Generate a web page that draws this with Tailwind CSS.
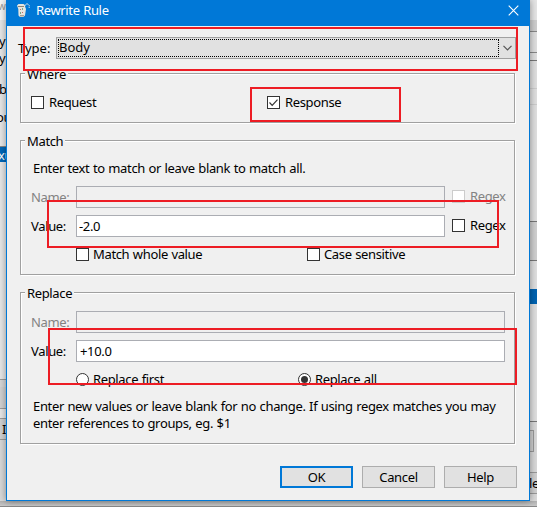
<!DOCTYPE html>
<html lang="en">
<head>
<meta charset="utf-8">
<title>Rewrite Rule</title>
<script src="https://cdn.jsdelivr.net/npm/@tailwindcss/browser@4"></script>
</head>
<body class="relative h-[507px] w-[537px] overflow-hidden bg-[#e2e2e2] font-['Noto_Sans',sans-serif] text-[13px] leading-[17px] tracking-[-0.35px] text-black [word-spacing:0.5px]">
<!-- Parent window showing around the dialog -->
<div class="flex h-[507px] justify-between">
  <div class="flex w-[6px] flex-col overflow-hidden bg-[#e6e6e6]">
    <div class="h-[20px] shrink-0 bg-[#f5f5f5] pt-px text-[10px] leading-[11px] text-[#999]"><span class="ml-[-2px]">w</span></div>
    <div class="mt-[13px] h-[17px] shrink-0"><span class="ml-[-1px]">y</span></div>
    <div class="h-[17px] shrink-0"><span class="ml-[-1px]">y</span></div>
    <div class="mt-[14px] h-[17px] shrink-0"><span class="ml-[-1px]">b</span></div>
    <div class="mt-[11px] h-[17px] shrink-0 whitespace-nowrap"><span class="ml-[-4px]">ou</span></div>
    <div class="mt-[20px] h-[16px] shrink-0 border-t border-[#888] bg-[#0067b8] leading-[17px] whitespace-nowrap text-white"><span class="ml-[-2px]">xu</span></div>
    <div class="mt-[217px] h-[9px] shrink-0 border-y border-[#999] bg-[#d6d6d6]"></div>
    <div class="mt-[-1px] h-[22px] shrink-0 border-b border-[#999] bg-[#d0d0d0]"></div>
    <div class="mt-[9px] h-[22px] shrink-0 border-y border-[#999] bg-[#d0d0d0] pl-[2px] leading-[20px]">I</div>
    <div class="flex-1 bg-[#d8d8d8]"></div>
  </div>
  <div class="flex w-[7px] flex-col overflow-hidden bg-[#d9d9d9]">
    <div class="h-[20px] shrink-0 bg-[#e5e5e5]"></div>
    <div class="h-[12px] shrink-0 border-b border-[#888] bg-[#cecece]"></div>
    <div class="h-[21px] shrink-0 border-b border-[#888] bg-[#dfdfdf]"></div>
    <div class="h-[8px] shrink-0 border-b border-[#777] bg-[#dfdfdf]"></div>
    <div class="h-[28px] shrink-0 border-b border-[#ccc] bg-[#dfdfdf]"></div>
    <div class="h-[16px] shrink-0 border-b border-[#ccc] bg-[#dfdfdf]"></div>
    <div class="h-[117px] shrink-0 border-b border-[#777] bg-[#dfdfdf]"></div>
    <div class="h-[39px] shrink-0 border-b border-[#777] bg-[#cfcfcf]"></div>
    <div class="h-[28px] shrink-0 bg-[#dfdfdf]"></div>
    <div class="h-[15px] shrink-0 bg-[#0063b1]"></div>
    <div class="h-[118px] shrink-0 border-b border-[#777] bg-[#dfdfdf]"></div>
    <div class="mt-[8px] mr-[3px] h-[22px] shrink-0 border-y border-r border-[#999] bg-[#cfcfcf]"></div>
    <div class="mt-[20px] h-[22px] shrink-0 border-y border-[#999] bg-[#cfcfcf] leading-[20px]"><span class="ml-[-1px]">le</span></div>
  </div>
</div>
<div class="absolute inset-x-0 top-[501px] h-[6px] border-b border-[#888] bg-linear-to-b from-[#b0b0b0] to-[#c8c8c8]"></div>

<!-- Dialog -->
<main class="absolute top-0 left-[6px] flex h-[501px] w-[524px] flex-col border-x border-b border-[#0078d7] bg-[#f0f0f0] shadow-[0_0_7px_#0006]">
  <header class="flex h-[26px] shrink-0 items-center bg-[#0078d7] pr-[10px] pl-[9px] text-white">
    <svg class="mt-[-6px] h-[15px] w-[15px]" viewBox="0 0 15 15">
      <path d="M1 2.5 2.5 1h5l2 1.5-.5 1L10 6l-1 6.5L7.5 14H4l-1.5-1.500L2.300 6Z" fill="#e6e5df"/>
      <path d="M2 3.500h6M4 12.800h4" stroke="#8d8477" fill="none"/>
      <path d="M4 6h1v1H4zM6 9h1v1H6z" fill="#c26b68"/><path d="M6 5h1v2H6zM4 9h1v2H4z" fill="#79a58a"/>
      <path d="M8.500 3 10 1h2l1.200 1.200V5" fill="none" stroke="#c9d8e5" stroke-dasharray="2 .6"/>
    </svg>
    <h1 class="mt-[-5px] ml-[5px] flex-1">Rewrite Rule</h1>
    <svg class="mt-[-6px] h-[11px] w-[11px]" viewBox="0 0 11 11"><path d="m.7.7 9.600 9.600m0-9.600L.7 10.300" fill="none" stroke="#fff" stroke-width="1.1"/></svg>
  </header>

  <div class="mt-[11px] flex h-[22px] shrink-0 pl-[11px]">
    <span class="w-[38px] pt-[3px] tracking-[0px]">Type:</span>
    <div class="flex w-[460px] items-center border border-[#a0a0a0] bg-[#e1e1e1] p-px">
      <div class="h-[18px] w-[441px] border border-dotted border-black leading-[15px] tracking-[0px]">Body</div>
      <svg class="ml-[4px] h-[6px] w-[9px]" viewBox="0 0 9 6"><path d="m.5.8 4 4 4-4" fill="none" stroke="#555" stroke-width="1.2"/></svg>
    </div>
  </div>

  <fieldset class="mx-[13px] mt-[6px] h-[58px] w-[495px] min-w-0 shrink-0 border border-[#a0a0a0] shadow-[1px_1px_0_#fff,inset_1px_1px_0_#fff]">
    <legend class="ml-[4px] h-[17px] bg-[#f0f0f0] px-[2px] leading-[18px] tracking-[-0.15px]">Where</legend>
    <div class="flex items-center pt-[12px] pl-[10px]">
      <label class="flex w-[236px] items-center gap-[5px]"><i class="h-[13px] w-[13px] border border-[#333] bg-white"></i>Request</label>
      <label class="flex items-center gap-[5px]"><svg class="h-[13px] w-[13px] border border-[#333] bg-white" viewBox="0 0 11 11"><path d="m1.500 5.500 2.700 2.800 5.300-5.600" fill="none" stroke="#333" stroke-width="1.2"/></svg>Response</label>
    </div>
  </fieldset>

  <fieldset class="mx-[13px] mt-[9px] h-[143px] w-[495px] min-w-0 shrink-0 border border-[#a0a0a0] shadow-[1px_1px_0_#fff,inset_1px_1px_0_#fff]">
    <legend class="ml-[4px] h-[17px] bg-[#f0f0f0] px-[2px] leading-[18px]">Match</legend>
    <p class="mt-[11px] pl-[12px]">Enter text to match or leave blank to match all.</p>
    <div class="mt-[9px] flex h-[22px] items-center pl-[10px] text-[#838383]">
      <span class="w-[45px]">Name:</span><div class="h-[22px] w-[369px] border border-[#abadb3]"></div>
      <label class="mt-[-1px] ml-[7px] flex items-center gap-[5px]"><i class="h-[13px] w-[13px] border border-[#ccc] bg-white"></i>Regex</label>
    </div>
    <div class="mt-[7px] flex h-[22px] items-center pl-[10px]">
      <span class="w-[45px]">Value:</span><div class="h-[22px] w-[369px] border border-[#abadb3] bg-white pl-[2px] leading-[20px]">-2.0</div>
      <label class="mt-[-1px] ml-[7px] flex items-center gap-[5px]"><i class="h-[13px] w-[13px] border border-[#333] bg-white"></i>Regex</label>
    </div>
    <div class="mt-[9px] flex pl-[55px]">
      <label class="flex w-[231px] items-center gap-[4px]"><i class="h-[13px] w-[13px] border border-[#333] bg-white"></i>Match whole value</label>
      <label class="flex items-center gap-[4px]"><i class="h-[13px] w-[13px] border border-[#333] bg-white"></i>Case sensitive</label>
    </div>
  </fieldset>

  <fieldset class="mx-[13px] mt-[9px] h-[160px] w-[495px] min-w-0 shrink-0 border border-[#a0a0a0] shadow-[1px_1px_0_#fff,inset_1px_1px_0_#fff]">
    <legend class="ml-[4px] h-[17px] bg-[#f0f0f0] px-[2px] leading-[18px]">Replace</legend>
    <div class="mt-[10px] flex h-[22px] items-center pl-[10px] text-[#838383]">
      <span class="w-[45px]">Name:</span><div class="h-[22px] w-[429px] border border-[#abadb3]"></div>
    </div>
    <div class="mt-[7px] flex h-[22px] items-center pl-[10px]">
      <span class="w-[45px]">Value:</span><div class="h-[22px] w-[429px] border border-[#abadb3] bg-white pl-[3px] leading-[20px]">+10.0</div>
    </div>
    <div class="mt-[9px] flex pl-[55px]">
      <label class="flex w-[222px] items-center gap-[4px]"><i class="h-[13px] w-[13px] rounded-full border border-[#333] bg-white"></i>Replace first</label>
      <label class="flex items-center gap-[4px]"><i class="flex h-[13px] w-[13px] items-center justify-center rounded-full border border-[#333] bg-white"><b class="h-[7px] w-[7px] rounded-full bg-[#333]"></b></i>Replace all</label>
    </div>
    <p class="mt-[10px] pl-[12px] whitespace-nowrap">Enter new values or leave blank for no change. If using regex matches you may<br>enter references to groups, eg. $1</p>
  </fieldset>

  <footer class="mt-[22px] flex justify-end gap-[9px] pr-[12px]">
    <button class="h-[22px] w-[73px] border-2 border-[#0078d7] bg-[#e1e1e1] leading-[18px]">OK</button>
    <button class="h-[22px] w-[73px] border border-[#adadad] bg-[#e1e1e1] leading-[20px]">Cancel</button>
    <button class="h-[22px] w-[73px] border border-[#adadad] bg-[#e1e1e1] leading-[20px]">Help</button>
  </footer>
</main>

<!-- Annotation frames -->
<div class="absolute top-[27px] left-[23px] h-[44px] w-[495px] border-2 border-[#ed1c24]"></div>
<div class="absolute top-[87px] left-[250px] h-[35px] w-[151px] border-2 border-[#ed1c24]"></div>
<div class="absolute top-[200px] left-[47px] h-[48px] w-[452px] border-2 border-[#ed1c24]"></div>
<div class="absolute top-[328px] left-[48px] h-[57px] w-[469px] border-2 border-[#ed1c24]"></div>
</body>
</html>
